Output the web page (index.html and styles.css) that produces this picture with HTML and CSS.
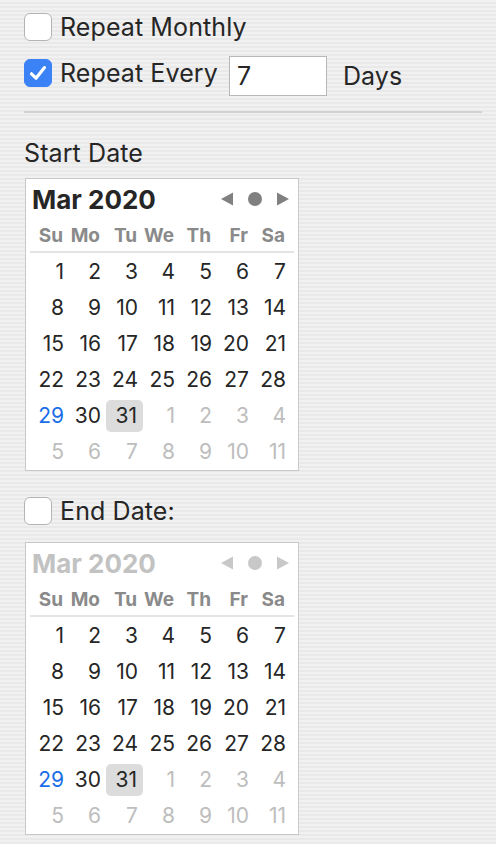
FILE: index.html
```html
<!DOCTYPE html>
<html>
<head>
<meta charset="utf-8">
<link rel="stylesheet" href="styles.css">
</head>
<body>
<div class="panel">
  <div class="row row-monthly">
    <span class="checkbox"></span>
    <span class="label">Repeat Monthly</span>
  </div>
  <div class="row row-every">
    <span class="checkbox checked">
      <svg width="28" height="28" viewBox="0 0 28 28"><path d="M7.5 14.8 L12 19.2 L20.5 8.6" fill="none" stroke="#fff" stroke-width="3.2" stroke-linecap="round" stroke-linejoin="round"/></svg>
    </span>
    <span class="label">Repeat Every</span>
    <span class="input">7</span>
    <span class="label days">Days</span>
  </div>
  <div class="separator"></div>
  <div class="section-title">Start Date</div>

  <div class="cal">
    <div class="cal-head">
      <span class="cal-title">Mar 2020</span>
      <svg class="cal-nav" width="70" height="16" viewBox="0 0 70 16"><polygon points="13,1.5 13,14.5 1,8"/><circle cx="35" cy="8" r="7"/><polygon points="57,1.5 57,14.5 69,8"/></svg>
    </div>
    <div class="cal-week">
      <span>Su</span><span>Mo</span><span>Tu</span><span>We</span><span>Th</span><span>Fr</span><span>Sa</span>
    </div>
    <div class="cal-line"></div>
    <div class="cal-grid">
      <span class="d">1</span><span class="d">2</span><span class="d">3</span><span class="d">4</span><span class="d">5</span><span class="d">6</span><span class="d">7</span>
      <span class="d">8</span><span class="d">9</span><span class="d">10</span><span class="d">11</span><span class="d">12</span><span class="d">13</span><span class="d">14</span>
      <span class="d">15</span><span class="d">16</span><span class="d">17</span><span class="d">18</span><span class="d">19</span><span class="d">20</span><span class="d">21</span>
      <span class="d">22</span><span class="d">23</span><span class="d">24</span><span class="d">25</span><span class="d">26</span><span class="d">27</span><span class="d">28</span>
      <span class="d today">29</span><span class="d">30</span><span class="d sel">31</span><span class="d other">1</span><span class="d other">2</span><span class="d other">3</span><span class="d other">4</span>
      <span class="d other">5</span><span class="d other">6</span><span class="d other">7</span><span class="d other">8</span><span class="d other">9</span><span class="d other">10</span><span class="d other">11</span>
    </div>
  </div>

  <div class="row row-end">
    <span class="checkbox"></span>
    <span class="label">End Date:</span>
  </div>

  <div class="cal cal-disabled">
    <div class="cal-head">
      <span class="cal-title">Mar 2020</span>
      <svg class="cal-nav" width="70" height="16" viewBox="0 0 70 16"><polygon points="13,1.5 13,14.5 1,8"/><circle cx="35" cy="8" r="7"/><polygon points="57,1.5 57,14.5 69,8"/></svg>
    </div>
    <div class="cal-week">
      <span>Su</span><span>Mo</span><span>Tu</span><span>We</span><span>Th</span><span>Fr</span><span>Sa</span>
    </div>
    <div class="cal-line"></div>
    <div class="cal-grid">
      <span class="d">1</span><span class="d">2</span><span class="d">3</span><span class="d">4</span><span class="d">5</span><span class="d">6</span><span class="d">7</span>
      <span class="d">8</span><span class="d">9</span><span class="d">10</span><span class="d">11</span><span class="d">12</span><span class="d">13</span><span class="d">14</span>
      <span class="d">15</span><span class="d">16</span><span class="d">17</span><span class="d">18</span><span class="d">19</span><span class="d">20</span><span class="d">21</span>
      <span class="d">22</span><span class="d">23</span><span class="d">24</span><span class="d">25</span><span class="d">26</span><span class="d">27</span><span class="d">28</span>
      <span class="d today">29</span><span class="d">30</span><span class="d sel">31</span><span class="d other">1</span><span class="d other">2</span><span class="d other">3</span><span class="d other">4</span>
      <span class="d other">5</span><span class="d other">6</span><span class="d other">7</span><span class="d other">8</span><span class="d other">9</span><span class="d other">10</span><span class="d other">11</span>
    </div>
  </div>
</div>
</body>
</html>
```
FILE: styles.css
```css
html, body {
  margin: 0;
  padding: 0;
}
body {
  width: 496px;
  height: 844px;
  overflow: hidden;
  font-family: Inter, "Liberation Sans", sans-serif;
  color: #262626;
  background: repeating-linear-gradient(to bottom, #f1f1f1 0 2px, #e9e9e9 2px 4px);
}
.panel {
  padding: 13px 14px 0 24px;
}
.row {
  display: flex;
  align-items: center;
}
.row-monthly {
  height: 28px;
}
.row-every {
  margin-top: 15px;
  height: 40px;
  align-items: flex-start;
}
.row-every .checkbox,
.row-every .label {
  margin-top: 3px;
}
.row-end {
  margin-top: 26px;
  height: 28px;
}
.checkbox {
  box-sizing: border-box;
  width: 28px;
  height: 28px;
  border: 1px solid #b4b4b4;
  border-radius: 6px;
  background: #fff;
  flex: none;
  display: flex;
}
.checkbox.checked {
  border-color: #3a82f6;
  background: #3a82f6;
}
.checkbox svg {
  margin: -1px;
}
.label {
  font-size: 25px;
  line-height: 28px;
  margin-left: 8px;
  white-space: nowrap;
  letter-spacing: 0.1px;
}
.input {
  box-sizing: border-box;
  width: 98px;
  height: 40px;
  margin-left: 11px;
  border: 1px solid #b8b8b8;
  background: #fff;
  font-size: 25px;
  line-height: 38px;
  padding-left: 7px;
}
.row-every .days {
  margin-left: 16px;
  margin-top: 0;
  line-height: 40px;
}
.separator {
  margin-top: 15px;
  height: 2px;
  width: 458px;
  background: #d2d2d2;
}
.section-title {
  margin-top: 25px;
  font-size: 25px;
  line-height: 30px;
  letter-spacing: 0.1px;
}
.cal {
  margin-top: 10px;
  margin-left: 1px;
  box-sizing: border-box;
  width: 274px;
  height: 293px;
  border: 1px solid #c9c9c9;
  background: #fff;
  padding: 0 6px 0 6px;
}
.row-end + .cal {
  margin-top: 17px;
}
.cal-head {
  height: 40px;
  display: flex;
  align-items: center;
  justify-content: space-between;
  padding: 0 2px 0 0;
}
.cal-title {
  font-size: 26px;
  font-weight: 700;
  color: #262626;
}
.cal-nav {
  fill: #808080;
  display: block;
}
.cal-week {
  height: 32px;
  display: grid;
  grid-template-columns: repeat(7, 37px);
  align-items: center;
  font-size: 19px;
  font-weight: 700;
  color: #8a8a8a;
}
.cal-week span {
  text-align: right;
  padding-right: 6px;
}
.cal-line {
  height: 2px;
  margin: 0 -2px 0 -2px;
  background: #e4e4e4;
}
.cal-grid {
  margin-top: 3px;
  display: grid;
  grid-template-columns: repeat(7, 37px);
  grid-auto-rows: 32px;
  row-gap: 4px;
  font-size: 21px;
}
.d {
  text-align: right;
  padding-right: 5px;
  line-height: 32px;
  border-radius: 5px;
}
.d.today {
  color: #1a6ee6;
}
.d.other {
  color: #bdbdbd;
}
.d.sel {
  background: #dcdcdc;
  padding-right: 6px;
}
.cal-disabled .cal-title {
  color: #c2c2c2;
}
.cal-disabled .cal-nav {
  fill: #c8c8c8;
}
```
